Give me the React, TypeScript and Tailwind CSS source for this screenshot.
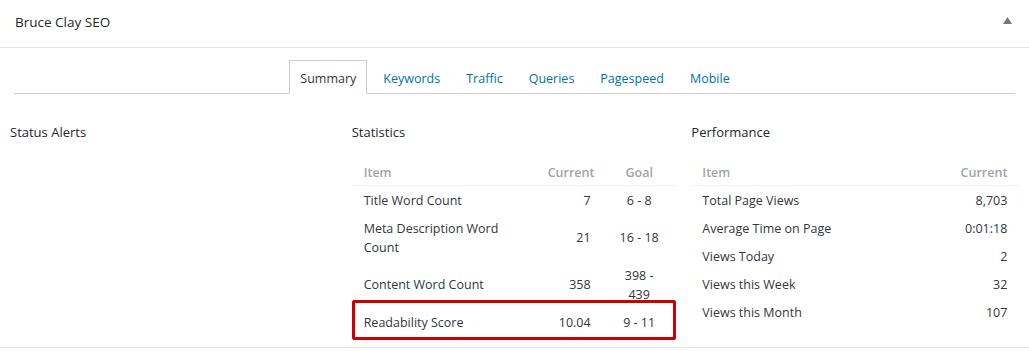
import React from 'react';

const statRows = [
  { item: 'Title Word Count', current: '7', goal: '6 - 8' },
  { item: 'Meta Description Word Count', current: '21', goal: '16 - 18' },
  { item: 'Content Word Count', current: '358', goal: '398 - 439' },
  { item: 'Readability Score', current: '10.04', goal: '9 - 11' },
];

const perfRows = [
  { item: 'Total Page Views', current: '8,703' },
  { item: 'Average Time on Page', current: '0:01:18' },
  { item: 'Views Today', current: '2' },
  { item: 'Views this Week', current: '32' },
  { item: 'Views this Month', current: '107' },
];

const tabs = ['Summary', 'Keywords', 'Traffic', 'Queries', 'Pagespeed', 'Mobile'];

function App() {
  return (
    <div className="relative w-[1029px] h-[351px] bg-white font-['Open_Sans',sans-serif] text-[12.5px] leading-[19px] text-[#32373c] overflow-hidden">
      {/* Box header */}
      <div className="h-[48px] border-b border-[#e5e5e5] flex items-center justify-between pl-[15px] pr-[17px]">
        <h2 className="text-[13.5px] text-[#23282d] -mt-[3px]">Bruce Clay SEO</h2>
        <svg width="9" height="7" viewBox="0 0 9 7" className="-mt-[6px]">
          <path d="M4.5 0 L9 7 L0 7 Z" fill="#72777c" />
        </svg>
      </div>

      {/* Tabs */}
      <div className="mx-[14px] mt-[12px] border-b border-[#ccc] flex justify-center">
        {tabs.map((t, i) =>
          i === 0 ? (
            <div
              key={t}
              className="h-[34px] px-[10px] pt-[3px] flex items-center border border-[#ccc] border-b-white -mb-px bg-white text-[#32373c]"
            >
              {t}
            </div>
          ) : (
            <div key={t} className="h-[33px] px-[10px] pt-[4px] ml-[6px] flex items-center text-[#0073aa]">
              {t}
            </div>
          )
        )}
      </div>

      {/* Columns */}
      <div className="grid grid-cols-3 gap-[15px] pl-[10px] pr-[9px] pt-[29px]">
        <div>
          <h3 className="text-[13px] text-[#23282d]">Status Alerts</h3>
        </div>

        <div>
          <h3 className="text-[13px] text-[#23282d]">Statistics</h3>
          <div className="relative mt-[17px] w-[324px]">
            <table className="w-full table-fixed border-collapse">
              <colgroup>
                <col className="w-[184px]" />
                <col className="w-[67px]" />
                <col className="w-[73px]" />
              </colgroup>
              <thead>
                <tr className="border-b border-[#f0f0f0]">
                  <th className="px-[12px] py-[3.5px] text-left font-semibold text-[#a0a5aa]">Item</th>
                  <th className="px-[12px] py-[3.5px] text-right font-semibold text-[#a0a5aa]">Current</th>
                  <th className="px-[12px] py-[3.5px] text-center font-semibold text-[#a0a5aa]">Goal</th>
                </tr>
              </thead>
              <tbody>
                {statRows.map((r) => (
                  <tr key={r.item}>
                    <td className="px-[12px] py-[4.5px] text-left align-middle">{r.item}</td>
                    <td className="px-[12px] py-[4.5px] text-right align-middle">{r.current}</td>
                    <td className="px-[12px] py-[4.5px] text-center align-middle">{r.goal}</td>
                  </tr>
                ))}
              </tbody>
            </table>
            {/* highlight on the readability row */}
            <div className="absolute left-0 right-0 -bottom-[4px] h-[40px] border-[3px] border-[#cc0000] rounded-[2px] pointer-events-none" />
          </div>
        </div>

        <div className="-ml-[2px]">
          <h3 className="text-[13px] text-[#23282d]">Performance</h3>
          <table className="mt-[17px] w-[328px] border-collapse">
            <thead>
              <tr className="border-b border-[#f0f0f0]">
                <th className="px-[11px] py-[3.5px] text-left font-semibold text-[#a0a5aa]">Item</th>
                <th className="px-[12px] py-[3.5px] text-right font-semibold text-[#a0a5aa]">Current</th>
              </tr>
            </thead>
            <tbody>
              {perfRows.map((r) => (
                <tr key={r.item}>
                  <td className="px-[11px] py-[4.5px] text-left">{r.item}</td>
                  <td className="px-[12px] py-[4.5px] text-right">{r.current}</td>
                </tr>
              ))}
            </tbody>
          </table>
        </div>
      </div>

      <div className="absolute left-0 top-[347px] w-[1029px] border-b border-[#e5e5e5]" />
    </div>
  );
}

export default App;
